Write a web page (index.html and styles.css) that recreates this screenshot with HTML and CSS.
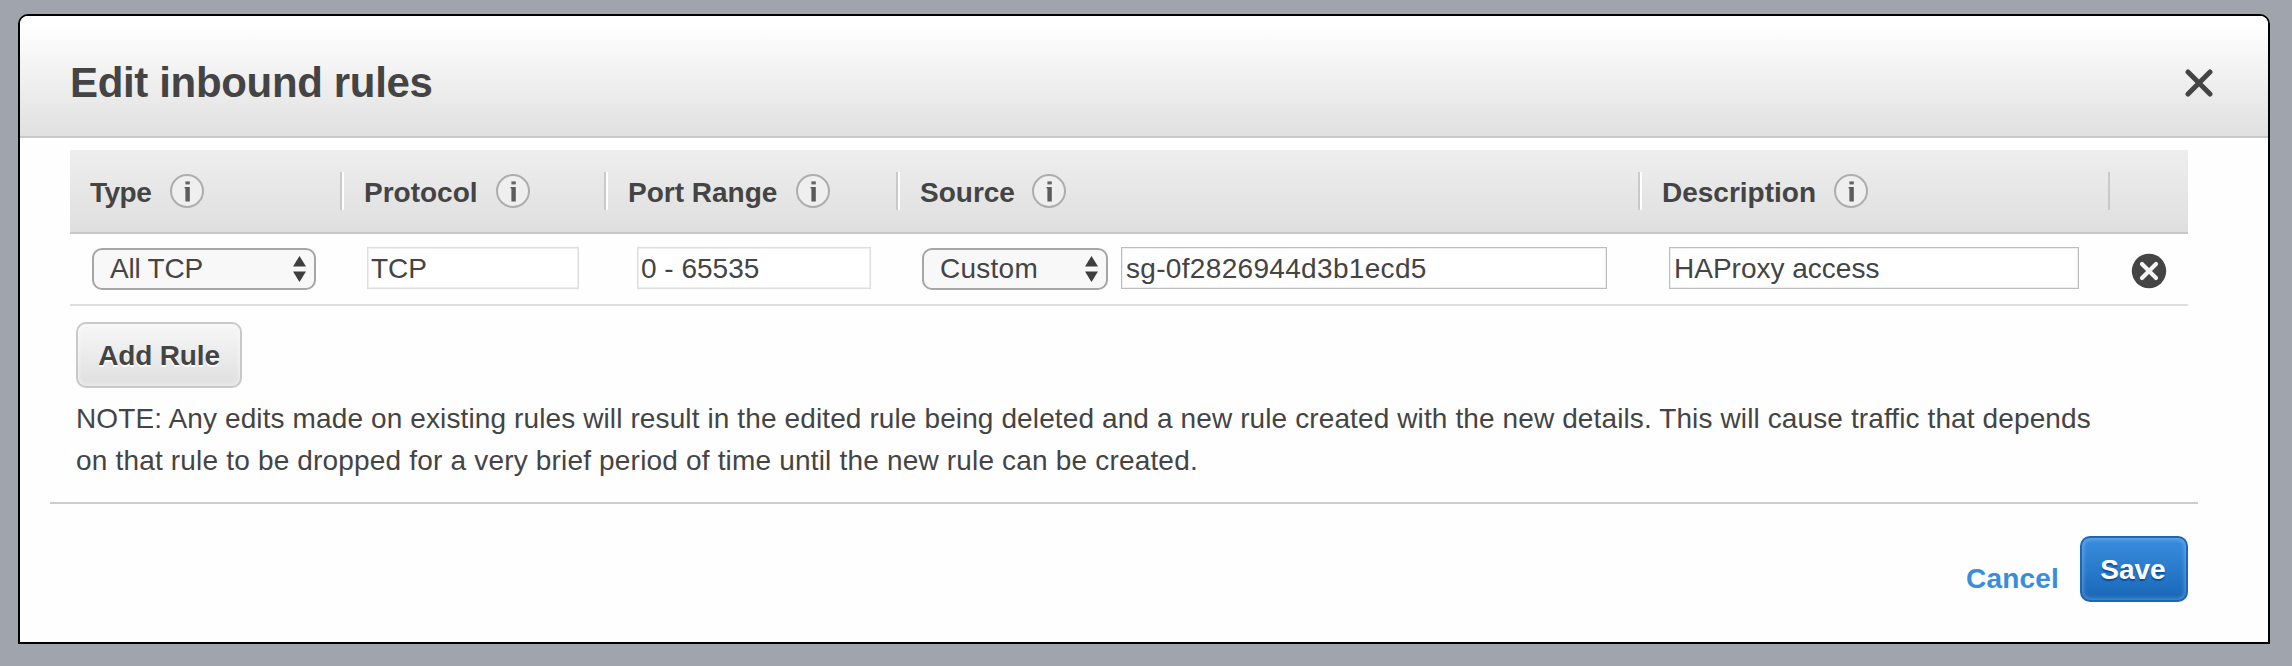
FILE: index.html
```html
<!DOCTYPE html>
<html lang="en">
<head>
<meta charset="utf-8">
<title>Edit inbound rules</title>
<link rel="stylesheet" href="styles.css">
</head>
<body>
<svg class="defs" width="0" height="0" aria-hidden="true">
  <symbol id="info" viewBox="0 0 36 36">
    <circle cx="18" cy="18" r="16" fill="#efefef" stroke="#adadad" stroke-width="2"/>
    <rect x="16.4" y="8.4" width="4.4" height="3" fill="#666"/>
    <path d="M15.6 14H20.8V28.6H16.4V15.6H15.6Z" fill="#5c5c5c"/>
  </symbol>
  <symbol id="arrows" viewBox="0 0 13 26">
    <path d="M6.5 0 13 10.4H0Z" fill="#3f3f3f"/>
    <path d="M0 15.6H13L6.5 26Z" fill="#3f3f3f"/>
  </symbol>
</svg>
<main class="modal">
  <header class="modal-header">
    <h1 class="title">Edit inbound rules</h1>
    <svg class="close" viewBox="0 0 28 28"><path d="M3 3 25 25M25 3 3 25" stroke="#444" stroke-width="5" stroke-linecap="round"/></svg>
  </header>
  <section class="rules">
    <div class="columns head">
      <div class="th"><span class="label type">Type</span><svg class="info"><use href="#info"/></svg></div>
      <div class="th"><span class="label protocol">Protocol</span><svg class="info"><use href="#info"/></svg></div>
      <div class="th"><span class="label port">Port Range</span><svg class="info"><use href="#info"/></svg></div>
      <div class="th"><span class="label source">Source</span><svg class="info"><use href="#info"/></svg></div>
      <div class="th"><span class="label description">Description</span><svg class="info"><use href="#info"/></svg></div>
      <div class="th last"></div>
    </div>
    <div class="columns row">
      <div class="td td-type"><div class="select"><span class="all-tcp">All TCP</span><svg class="arrows"><use href="#arrows"/></svg></div></div>
      <div class="td td-protocol"><div class="field muted">TCP</div></div>
      <div class="td td-port"><div class="field muted">0 - 65535</div></div>
      <div class="td td-source"><div class="select custom"><span>Custom</span><svg class="arrows"><use href="#arrows"/></svg></div><div class="field group">sg-0f2826944d3b1ecd5</div></div>
      <div class="td td-description"><div class="field">HAProxy access</div></div>
      <div class="td td-delete"><svg class="delete" viewBox="0 0 36 36"><circle cx="18" cy="18" r="17.2" fill="#444"/><path d="M11 11 25 25M25 11 11 25" stroke="#f4f4f4" stroke-width="4.2" stroke-linecap="round"/></svg></div>
    </div>
  </section>
  <section class="below">
    <button class="btn add">Add Rule</button>
    <p class="note">NOTE: Any edits made on existing rules will result in the edited rule being deleted and a new rule created with the new details. This will cause traffic that depends<br><span class="note-end">on that rule to be dropped for a very brief period of time until the new rule can be created.</span></p>
  </section>
  <footer class="actions">
    <a class="cancel">Cancel</a>
    <button class="btn save">Save</button>
  </footer>
</main>
</body>
</html>
```
FILE: styles.css
```css
* { box-sizing: border-box; }
body {
  margin: 0;
  height: 666px;
  padding: 14px 22px 22px 18px;
  overflow: hidden;
  background: #a0a4ac;
  color: #444;
  font: 28px/42px "Liberation Sans", Arial, sans-serif;
}
.defs { display: block; position: absolute; }
.modal {
  width: 2252px;
  height: 630px;
  border: 2px solid #000;
  border-radius: 10px 10px 0 0;
  background: #fefefe;
  overflow: hidden;
}
.modal-header {
  display: flex;
  align-items: center;
  justify-content: space-between;
  height: 122px;
  padding: 0 55px 0 50px;
  border-bottom: 2px solid #c9c9c9;
  background: linear-gradient(#fff 8%, #e0e0e0);
}
.title {
  margin: 0;
  padding-top: 13px;
  font-size: 42px;
  line-height: 48px;
  letter-spacing: -.34px;
  white-space: nowrap;
}
.close { width: 28px; height: 28px; margin-top: 14px; fill: none; }
.rules { width: 2118px; margin: 12px 0 0 50px; }
.columns {
  display: grid;
  grid-template-columns: 274px 264px 292px 742px 468px 78px;
}
.head {
  height: 84px;
  padding-top: 22px;
  border-bottom: 2px solid #c8c8c8;
  background: linear-gradient(#eee, #dfdfdf);
}
.th {
  display: flex;
  align-items: center;
  height: 38px;
  padding-left: 20px;
  border-right: 2px solid #fff;
  box-shadow: inset -2px 0 #c9c9c9;
}
.th:nth-child(5) { border-right: 0; }
.th.last { border: 0; box-shadow: none; }
.label { flex: none; font-weight: bold; padding-top: 3px; white-space: nowrap; }
.type { width: 79px; letter-spacing: -.5px; }
.protocol { width: 131px; }
.port { width: 167px; }
.source { width: 111px; }
.description { width: 171px; }
.info { flex: none; width: 36px; height: 36px; }
.row { height: 72px; border-bottom: 2px solid #dfdfdf; }
.td { display: flex; align-items: flex-start; padding-top: 13px; }
.td-type { padding-left: 22px; }
.td-protocol { padding: 13px 29px 0 23px; }
.td-port { padding: 13px 29px 0 29px; }
.td-source { padding: 13px 35px 0 22px; gap: 13px; }
.td-description { padding: 13px 31px 0 27px; }
.td-delete { padding: 19px 0 0 21px; }
.delete { width: 36px; height: 36px; }
.select {
  display: flex;
  flex: none;
  align-items: center;
  justify-content: space-between;
  width: 224px;
  height: 42px;
  margin-top: 1px;
  padding: 0 8px 0 16px;
  border: 2px solid #a6a6a6;
  border-radius: 10px;
  background: #f8f8f8;
  line-height: 38px;
}
.all-tcp { letter-spacing: -.2px; }
.custom { width: 186px; letter-spacing: .25px; }
.arrows { width: 13px; height: 26px; }
.field {
  flex: 1;
  height: 42px;
  padding-left: 4px;
  border: 1px solid #bdbdbd;
  background: #fff;
  box-shadow: inset 0 0 0 1px #eee;
  line-height: 42px;
  white-space: nowrap;
}
.muted { border-color: #ddd; padding-left: 3px; }
.group { letter-spacing: .32px; }
.below {
  width: 2148px;
  height: 198px;
  margin-left: 30px;
  padding: 16px 0 0 26px;
  border-bottom: 2px solid #ccc;
}
.btn {
  display: block;
  height: 66px;
  padding: 2px 0 0;
  border: 2px solid;
  border-radius: 10px;
  font: bold 28px/60px "Liberation Sans", Arial, sans-serif;
}
.add {
  width: 166px;
  border-color: #c9c9c9;
  background: linear-gradient(#f7f7f7, #dfdfdf);
  box-shadow: inset 0 0 4px 1px rgba(255, 255, 255, .55);
  color: #444;
  letter-spacing: -.15px;
  text-shadow: 0 2px #fff;
}
.note { margin: 10px 0 0; letter-spacing: .115px; white-space: nowrap; }
.note-end { letter-spacing: .18px; }
.actions {
  display: flex;
  justify-content: flex-end;
  align-items: flex-start;
  gap: 21px;
  padding: 32px 80px 0 0;
}
.cancel { padding-top: 22px; color: #388ddd; font-weight: bold; letter-spacing: .2px; }
.save {
  width: 108px;
  padding-right: 2px;
  border-color: #1a66b7;
  background: linear-gradient(#3a8edf, #1867b7);
  box-shadow: inset 0 0 4px 1px rgba(255, 255, 255, .3);
  color: #fff;
  text-shadow: 0 2px 1px rgba(0, 50, 120, .6);
}
```
